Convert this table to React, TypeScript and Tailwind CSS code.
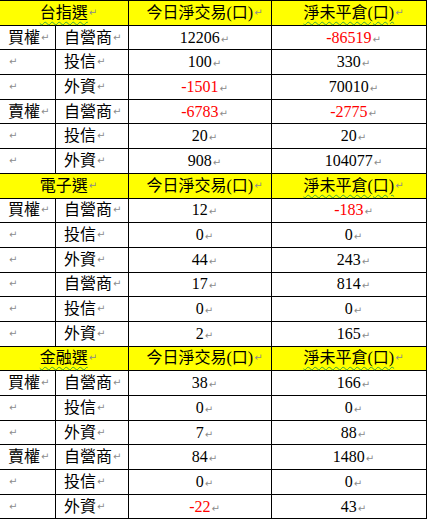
type Row = { side: string; who: string; today: number; oi: number };
type Section = { title: string; wavy: boolean; rows: Row[] };

const sections: Section[] = [
  {
    title: "台指選",
    wavy: true,
    rows: [
      { side: "買權", who: "自營商", today: 12206, oi: -86519 },
      { side: "", who: "投信", today: 100, oi: 330 },
      { side: "", who: "外資", today: -1501, oi: 70010 },
      { side: "賣權", who: "自營商", today: -6783, oi: -2775 },
      { side: "", who: "投信", today: 20, oi: 20 },
      { side: "", who: "外資", today: 908, oi: 104077 },
    ],
  },
  {
    title: "電子選",
    wavy: false,
    rows: [
      { side: "買權", who: "自營商", today: 12, oi: -183 },
      { side: "", who: "投信", today: 0, oi: 0 },
      { side: "", who: "外資", today: 44, oi: 243 },
      { side: "", who: "自營商", today: 17, oi: 814 },
      { side: "", who: "投信", today: 0, oi: 0 },
      { side: "", who: "外資", today: 2, oi: 165 },
    ],
  },
  {
    title: "金融選",
    wavy: true,
    rows: [
      { side: "買權", who: "自營商", today: 38, oi: 166 },
      { side: "", who: "投信", today: 0, oi: 0 },
      { side: "", who: "外資", today: 7, oi: 88 },
      { side: "賣權", who: "自營商", today: 84, oi: 1480 },
      { side: "", who: "投信", today: 0, oi: 0 },
      { side: "", who: "外資", today: -22, oi: 43 },
    ],
  },
];

// Word 的段落符號
function Mark() {
  return (
    <span className="text-[10px] text-[#8c8c8c] font-['DejaVu_Sans',sans-serif] ml-[1px]">↵</span>
  );
}

const wavy = "underline decoration-wavy decoration-[#3aa53a] decoration-1 underline-offset-[3px]";

function Num({ v }: { v: number }) {
  return (
    <span className={v < 0 ? "text-[#ff0000]" : "text-black"}>
      {v}
      <Mark />
    </span>
  );
}

const rowCls = "grid grid-cols-[56px_73px_143px_155px] h-[24.7px]";
const cell = "border-r border-b border-black flex items-center";
const mid = "justify-center pl-[9px]";

export default function App() {
  return (
    <div className="w-[428px] h-[520px] bg-white overflow-hidden">
      <div className="w-[427px] border-t border-black text-[16px] leading-none text-black font-['Liberation_Serif','Noto_Sans_CJK_TC',serif]">
        {sections.map((s) => (
          <div key={s.title}>
            <div className={`${rowCls} bg-[#ffff00]`}>
              <div className={`${cell} ${mid} col-span-2`}>
                <span className={s.wavy ? wavy : ""}>{s.title}</span>
                <Mark />
              </div>
              <div className={`${cell} ${mid}`}>
                今日淨交易(口)
                <Mark />
              </div>
              <div className={`${cell} ${mid}`}>
                <span className={wavy}>淨未平倉(口)</span>
                <Mark />
              </div>
            </div>
            {s.rows.map((r, i) => (
              <div key={i} className={rowCls}>
                <div className={`${cell} pl-[8px]`}>
                  {r.side}
                  <Mark />
                </div>
                <div className={`${cell} pl-[8px]`}>
                  {r.who}
                  <Mark />
                </div>
                <div className={`${cell} ${mid}`}>
                  <Num v={r.today} />
                </div>
                <div className={`${cell} ${mid}`}>
                  <Num v={r.oi} />
                </div>
              </div>
            ))}
          </div>
        ))}
      </div>
    </div>
  );
}
